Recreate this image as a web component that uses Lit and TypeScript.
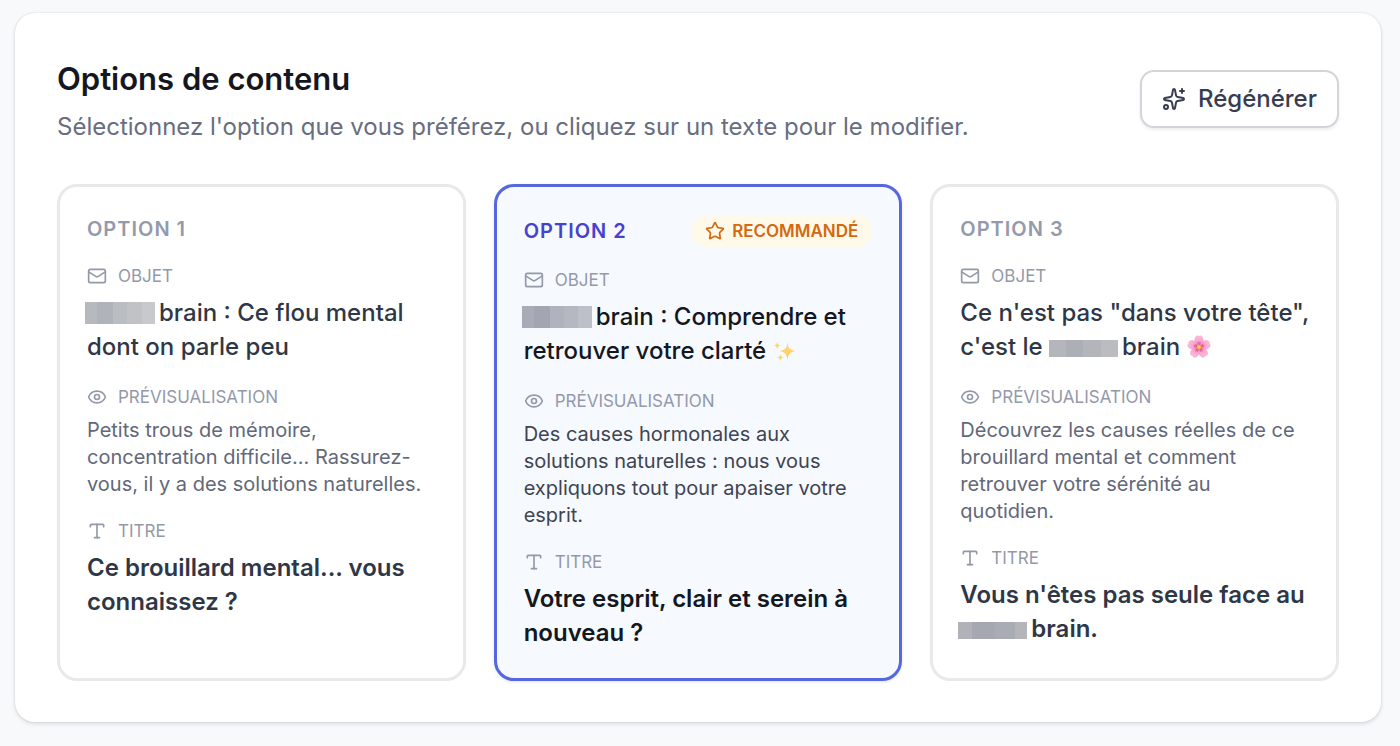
import { LitElement, html, svg, css, type TemplateResult } from "lit";
import { customElement, property } from "lit/decorators.js";

type Piece = string | { mask: "a" | "b" | "c" | "d" } | { emoji: "sparkles" | "blossom" };

interface Option {
  id: number;
  recommended?: boolean;
  subject: Piece[];
  preview: string;
  heading: Piece[];
}

const OPTIONS: Option[] = [
  {
    id: 1,
    subject: [{ mask: "a" }, "brain : Ce flou mental dont on parle peu"],
    preview: "Petits trous de mémoire, concentration difficile... Rassurez-vous, il y a des solutions naturelles.",
    heading: ["Ce brouillard mental... vous connaissez ?"],
  },
  {
    id: 2,
    recommended: true,
    subject: [{ mask: "b" }, "brain : Comprendre et retrouver votre clarté ", { emoji: "sparkles" }],
    preview: "Des causes hormonales aux solutions naturelles : nous vous expliquons tout pour apaiser votre esprit.",
    heading: ["Votre esprit, clair et serein à nouveau ?"],
  },
  {
    id: 3,
    subject: ["Ce n'est pas \"dans votre tête\", ", "c'est le ", { mask: "c" }, "brain ", { emoji: "blossom" }],
    preview: "Découvrez les causes réelles de ce brouillard mental et comment retrouver votre sérénité au quotidien.",
    heading: ["Vous n'êtes pas seule face au ", { mask: "d" }, "brain."],
  },
];

const ICONS = {
  mail: svg`<rect x="2" y="4" width="20" height="16" rx="2"/><path d="m22 7-8.991 5.727a2 2 0 0 1-2.009 0L2 7"/>`,
  eye: svg`<path d="M2.062 12.348a1 1 0 0 1 0-.696 10.75 10.75 0 0 1 19.876 0 1 1 0 0 1 0 .696 10.75 10.75 0 0 1-19.876 0"/><circle cx="12" cy="12" r="3"/>`,
  type: svg`<path d="M12 4v16"/><path d="M4 7V5a1 1 0 0 1 1-1h14a1 1 0 0 1 1 1v2"/><path d="M9 20h6"/>`,
  star: svg`<path d="M11.525 2.295a.53.53 0 0 1 .95 0l2.31 4.679a2.123 2.123 0 0 0 1.595 1.16l5.166.756a.53.53 0 0 1 .294.904l-3.736 3.638a2.123 2.123 0 0 0-.611 1.878l.882 5.14a.53.53 0 0 1-.771.56l-4.618-2.428a2.122 2.122 0 0 0-1.973 0L6.396 21.01a.53.53 0 0 1-.77-.56l.881-5.139a2.122 2.122 0 0 0-.611-1.879L2.16 9.795a.53.53 0 0 1 .294-.906l5.165-.755a2.122 2.122 0 0 0 1.597-1.16z"/>`,
  sparkles: svg`<path d="M11.017 2.814a1 1 0 0 1 1.966 0l1.051 5.558a2 2 0 0 0 1.594 1.594l5.558 1.051a1 1 0 0 1 0 1.966l-5.558 1.051a2 2 0 0 0-1.594 1.594l-1.051 5.558a1 1 0 0 1-1.966 0l-1.051-5.558a2 2 0 0 0-1.594-1.594l-5.558-1.051a1 1 0 0 1 0-1.966l5.558-1.051a2 2 0 0 0 1.594-1.594z"/><path d="M20 2v4"/><path d="M22 4h-4"/><circle cx="4" cy="20" r="2"/>`,
};

const icon = (name: keyof typeof ICONS, strokeWidth = 2) => html`<svg
  class="icon"
  viewBox="0 0 24 24"
  fill="none"
  stroke="currentColor"
  stroke-width=${strokeWidth}
  stroke-linecap="round"
  stroke-linejoin="round"
  aria-hidden="true"
>${ICONS[name]}</svg>`;

const petal = (angle: number) => svg`<g transform="rotate(${angle} 12 12)">
  <path d="M12 12C7.6 9.4 6.6 3.6 9.4 1.2Q10.8.2 12 1.6Q13.2.2 14.6 1.2C17.4 3.6 16.4 9.4 12 12Z" fill="url(#petal)" stroke="#f08fbe" stroke-width=".4"/>
  <path d="M12 11V6.6M12 11l-1.4-3.6M12 11l1.4-3.6" stroke="#dc4a8e" stroke-width=".6" stroke-linecap="round"/>
</g>`;

const EMOJI: Record<"sparkles" | "blossom", TemplateResult> = {
  sparkles: html`<svg class="emoji" viewBox="0 0 24 24" role="img" aria-label="✨">
    <defs><linearGradient id="gold" x1="0" y1="0" x2="0" y2="1"><stop offset="0" stop-color="#ffe08a"/><stop offset="1" stop-color="#fdc650"/></linearGradient></defs>
    <g fill="url(#gold)">
      <path d="M14.5 3C15.2 9 16.8 11 22.4 12C16.8 13 15.2 15 14.5 21C13.8 15 12.2 13 6.6 12C12.2 11 13.8 9 14.5 3Z"/>
      <path d="M4.2 2.6C4.6 5.1 5.3 6 7.4 6.4C5.3 6.8 4.6 7.7 4.2 10.2C3.8 7.7 3.1 6.8 1 6.4C3.1 6 3.8 5.1 4.2 2.6Z"/>
      <path d="M7.4 14.8C7.8 17.3 8.5 18 10.6 18.4C8.5 18.8 7.8 19.5 7.4 22C7 19.5 6.3 18.8 4.2 18.4C6.3 18 7 17.3 7.4 14.8Z"/>
    </g>
  </svg>`,
  blossom: html`<svg class="emoji" viewBox="0 0 24 24" role="img" aria-label="🌸">
    <defs><radialGradient id="petal" gradientUnits="userSpaceOnUse" cx="12" cy="12" r="11"><stop offset=".1" stop-color="#ee5f9f"/><stop offset=".5" stop-color="#f9a3cb"/><stop offset="1" stop-color="#fdbcdb"/></radialGradient></defs>
    ${[0, 72, 144, 216, 288].map(petal)}
    <circle cx="12" cy="12" r="2.2" fill="#f9b53c"/><circle cx="12" cy="12" r="1" fill="#ffe07a"/>
  </svg>`,
};

const renderPieces = (pieces: Piece[]) =>
  pieces.map((piece) => {
    if (typeof piece === "string") return piece;
    if ("mask" in piece) return html`<span class="mask mask-${piece.mask}"></span>`;
    return EMOJI[piece.emoji];
  });

@customElement("option-card")
export class OptionCard extends LitElement {
  @property({ attribute: false }) option!: Option;

  static styles = css`
    :host { display: grid; min-width: 0; }
    * { box-sizing: border-box; margin: 0; }
    .card {
      display: flex;
      flex-direction: column;
      gap: 20px;
      padding: 28px 27px;
      border: 3px solid #e8e9eb;
      border-radius: 20px;
      background: #fff;
      color: #2f3747;
    }
    .head { display: flex; align-items: center; justify-content: space-between; }
    .name {
      font-size: 20px;
      line-height: 28px;
      font-weight: 600;
      letter-spacing: 1px;
      text-transform: uppercase;
      color: #949aac;
    }
    .badge {
      display: flex;
      align-items: center;
      gap: 7px;
      padding: 3px 14px;
      border-radius: 16px;
      background: #fef9e8;
      color: #d4690f;
      font-size: 17px;
      line-height: 26px;
      font-weight: 600;
      text-transform: uppercase;
    }
    .icon { width: 20px; height: 20px; flex: none; display: block; }
    .field { display: flex; flex-direction: column; gap: 7px; }
    .label {
      display: flex;
      align-items: center;
      gap: 11px;
      font-size: 17px;
      line-height: 26px;
      font-weight: 400;
      text-transform: uppercase;
      color: #9499aa;
    }
    .subject, .heading { font-size: 24px; line-height: 34px; }
    .subject { font-weight: 500; }
    .heading { font-weight: 600; }
    .preview { font-size: 20px; line-height: 27px; color: #626879; }
    .recommended {
      border-color: #5568e0;
      background: #f6f9fe;
      color: #131722;
      box-shadow: 0 1px 3px rgba(60, 60, 140, 0.14);
    }
    .recommended .name { color: #4642cf; }
    .recommended .preview { color: #3e4452; }
    .mask { display: inline-block; width: 69px; height: 17px; vertical-align: -2px; margin-right: 4px; }
    .mask-a, .mask-b { width: 70px; height: 22px; vertical-align: -3px; }
    .mask-a, .mask-b, .mask-d { margin-left: -2px; }
    .mask-a { background: linear-gradient(90deg, #b6b9be 0 17%, #b0b3ba 17% 40%, #babdc2 40% 60%, #c0c2c6 60% 82%, #c7c9cc 82%); }
    .mask-b { background: linear-gradient(90deg, #a9abb6 0 17%, #a3a5b0 17% 40%, #b0b2bd 40% 60%, #b5b7c1 60% 80%, #bdc0c9 80%); }
    .mask-c { background: linear-gradient(90deg, #b4b6bb 0 25%, #adafb7 25% 50%, #b3b5bb 50% 75%, #babcc0 75%); }
    .mask-d { background: linear-gradient(90deg, #afb2b7 0 20%, #a5a8b1 20% 53%, #a9acb3 53% 82%, #b3b5b9 82%); }
    .emoji { display: inline-block; width: 24px; height: 24px; vertical-align: -4px; }
  `;

  render() {
    const { id, recommended, subject, preview, heading } = this.option;
    return html`<article class="card ${recommended ? "recommended" : ""}">
      <header class="head">
        <h3 class="name">Option ${id}</h3>
        ${recommended ? html`<span class="badge">${icon("star")}<span>Recommandé</span></span>` : null}
      </header>
      <section class="field">
        <h4 class="label">${icon("mail")}Objet</h4>
        <p class="subject">${renderPieces(subject)}</p>
      </section>
      <section class="field">
        <h4 class="label">${icon("eye")}Prévisualisation</h4>
        <p class="preview">${preview}</p>
      </section>
      <section class="field">
        <h4 class="label">${icon("type")}Titre</h4>
        <p class="heading">${renderPieces(heading)}</p>
      </section>
    </article>`;
  }
}

@customElement("app-root")
export class AppRoot extends LitElement {
  static styles = css`
    :host {
      display: block;
      box-sizing: border-box;
      min-height: 100vh;
      padding: 13px 19px 23px 15px;
      background: #f8f9fb;
      font-family: Inter, "Liberation Sans", sans-serif;
    }
    * { box-sizing: border-box; margin: 0; }
    .panel {
      display: flex;
      flex-direction: column;
      gap: 40px;
      padding: 41px 42px;
      border-radius: 20px;
      background: #fff;
      box-shadow: 0 0 2px rgba(20, 25, 40, 0.14), 0 2px 4px rgba(20, 25, 40, 0.12);
    }
    .top { display: flex; align-items: center; justify-content: space-between; gap: 24px; }
    .intro { display: flex; flex-direction: column; gap: 7px; }
    .title { font-size: 31px; line-height: 49px; font-weight: 600; color: #141721; }
    .subtitle { font-size: 24px; line-height: 34px; color: #686d80; }
    .regenerate {
      display: flex;
      align-items: center;
      gap: 12px;
      padding: 10px 20px;
      border: 2px solid #d3d5da;
      border-radius: 14px;
      background: #fff;
      box-shadow: 0 2px 3px rgba(20, 25, 40, 0.08);
      color: #373c50;
      font: 500 24px/34px Inter, "Liberation Sans", sans-serif;
      cursor: pointer;
    }
    .icon { width: 24px; height: 24px; flex: none; }
    .options { display: grid; grid-template-columns: repeat(auto-fit, minmax(320px, 1fr)); gap: 28px; }
  `;

  render() {
    return html`<main class="panel">
      <header class="top">
        <div class="intro">
          <h2 class="title">Options de contenu</h2>
          <p class="subtitle">Sélectionnez l'option que vous préférez, ou cliquez sur un texte pour le modifier.</p>
        </div>
        <button class="regenerate" type="button">${icon("sparkles")}Régénérer</button>
      </header>
      <div class="options">
        ${OPTIONS.map((option) => html`<option-card .option=${option}></option-card>`)}
      </div>
    </main>`;
  }
}
